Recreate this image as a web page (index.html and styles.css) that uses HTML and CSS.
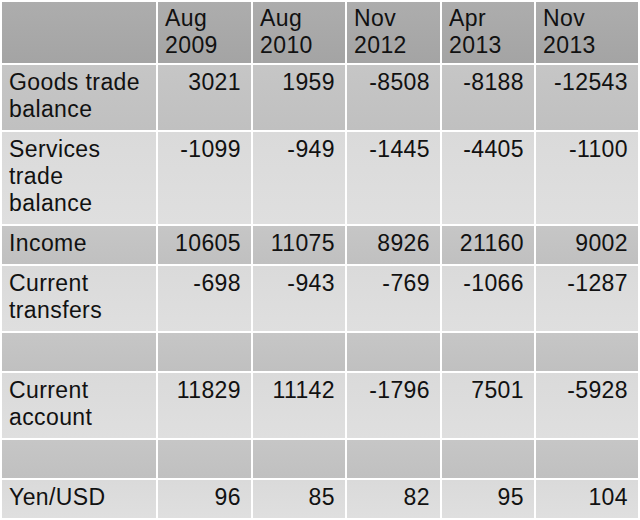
FILE: index.html
```
<!DOCTYPE html>
<html>
<head>
<meta charset="utf-8">
<link rel="stylesheet" href="styles.css">
</head>
<body>
<table class="bop">
  <colgroup>
    <col class="c-label">
    <col class="c-a">
    <col class="c-b">
    <col class="c-a">
    <col class="c-b">
    <col class="c-last">
  </colgroup>
  <thead>
    <tr class="head">
      <th></th>
      <th>Aug<br>2009</th>
      <th>Aug<br>2010</th>
      <th>Nov<br>2012</th>
      <th>Apr<br>2013</th>
      <th>Nov<br>2013</th>
    </tr>
  </thead>
  <tbody>
    <tr class="dark">
      <td class="label">Goods trade balance</td>
      <td>3021</td><td>1959</td><td>-8508</td><td>-8188</td><td>-12543</td>
    </tr>
    <tr class="light">
      <td class="label">Services trade balance</td>
      <td>-1099</td><td>-949</td><td>-1445</td><td>-4405</td><td>-1100</td>
    </tr>
    <tr class="dark">
      <td class="label">Income</td>
      <td>10605</td><td>11075</td><td>8926</td><td>21160</td><td>9002</td>
    </tr>
    <tr class="light">
      <td class="label">Current transfers</td>
      <td>-698</td><td>-943</td><td>-769</td><td>-1066</td><td>-1287</td>
    </tr>
    <tr class="dark empty">
      <td class="label"></td>
      <td></td><td></td><td></td><td></td><td></td>
    </tr>
    <tr class="light">
      <td class="label">Current account</td>
      <td>11829</td><td>11142</td><td>-1796</td><td>7501</td><td>-5928</td>
    </tr>
    <tr class="dark empty">
      <td class="label"></td>
      <td></td><td></td><td></td><td></td><td></td>
    </tr>
    <tr class="light">
      <td class="label">Yen/USD</td>
      <td>96</td><td>85</td><td>82</td><td>95</td><td>104</td>
    </tr>
  </tbody>
</table>
</body>
</html>
```
FILE: styles.css
```
html, body {
  margin: 0;
  padding: 0;
  background: #ffffff;
}

body {
  font-family: "Liberation Sans", Arial, sans-serif;
  font-size: 23px;
  line-height: 27px;
  color: #111111;
}

.bop {
  width: 640px;
  table-layout: fixed;
  border-collapse: separate;
  border-spacing: 2px;
  background: #ffffff;
}

.c-label { width: 154px; }
.c-a { width: 93px; }
.c-b { width: 92px; }
.c-last { width: 102px; }

.bop th,
.bop td {
  box-sizing: border-box;
  vertical-align: top;
  padding: 4px 10px 7px 7px;
  text-align: right;
  font-weight: normal;
  letter-spacing: 0.4px;
}

.bop th {
  text-align: left;
  padding: 3px 8px 4px 7px;
}

.bop td.label {
  text-align: left;
}

.head th {
  background: linear-gradient(#adadad, #a4a4a4);
}

.dark td {
  background: linear-gradient(#c6c6c6, #c0c0c0);
}

.light td {
  background: linear-gradient(#dadada, #dfdfdf);
}

.empty td {
  height: 38px;
}
```
